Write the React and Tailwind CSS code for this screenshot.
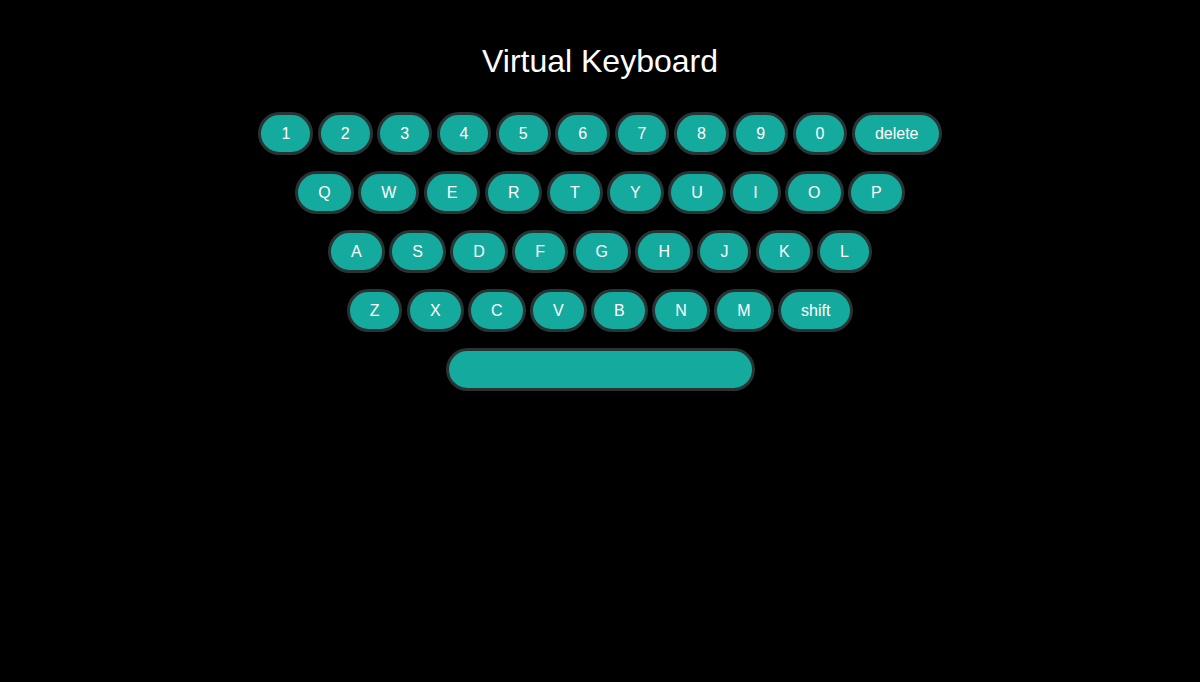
const rows = [
  ['1', '2', '3', '4', '5', '6', '7', '8', '9', '0', 'delete'],
  ['Q', 'W', 'E', 'R', 'T', 'Y', 'U', 'I', 'O', 'P'],
  ['A', 'S', 'D', 'F', 'G', 'H', 'J', 'K', 'L'],
  ['Z', 'X', 'C', 'V', 'B', 'N', 'M', 'shift'],
];

function Key({ label }) {
  return (
    <button className="box-border h-[43px] px-5 rounded-full border-[3px] border-[#283334] bg-[#15aa9e] text-white text-[16px] leading-[17px]">
      {label}
    </button>
  );
}

export default function App() {
  return (
    <div className="min-h-[682px] w-full bg-black flex flex-col items-center font-['Liberation_Sans',Arial,sans-serif]">
      <h1 className="mt-[43px] text-[32px] leading-[37px] text-white font-normal">
        Virtual Keyboard
      </h1>

      <div className="mt-[32px] flex flex-col items-center gap-4">
        {rows.map((row, i) => (
          <div key={i} className="flex gap-[4.45px]">
            {row.map((k) => (
              <Key key={k} label={k} />
            ))}
          </div>
        ))}
        <div className="flex">
          <button className="box-border w-[309px] h-[43px] rounded-full border-[3px] border-[#283334] bg-[#15aa9e]" />
        </div>
      </div>
    </div>
  );
}
